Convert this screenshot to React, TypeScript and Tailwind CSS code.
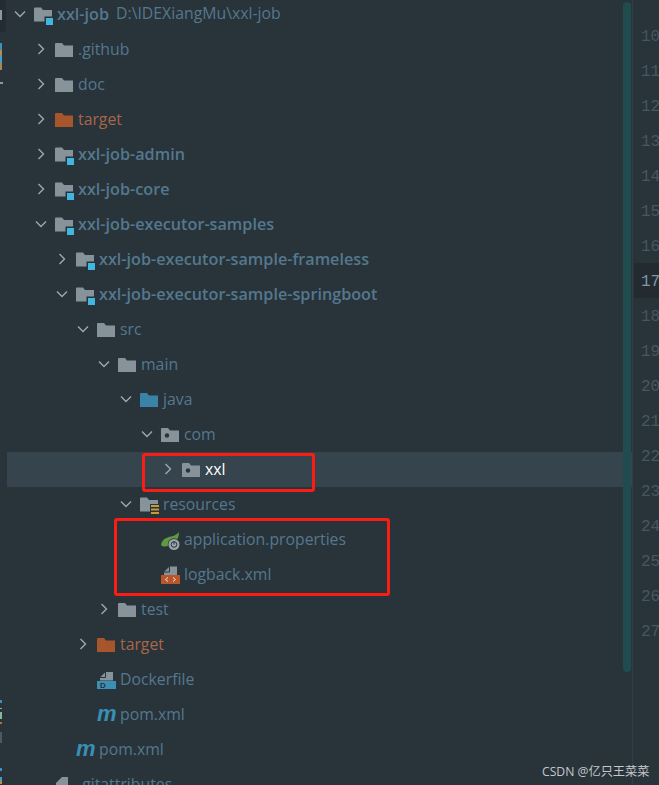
import React from 'react';

type Kind = 'folder' | 'excluded' | 'module' | 'source' | 'pkg' | 'res' | 'spring' | 'xml' | 'docker' | 'maven' | 'file';

type Row = {
  name: string;
  level: number;
  kind: Kind;
  open?: boolean;
  leaf?: boolean;
  bold?: boolean;
  selected?: boolean;
  hint?: string;
};

const rows: Row[] = [
  { name: 'xxl-job', level: 0, kind: 'module', open: true, bold: true, hint: 'D:\\IDEXiangMu\\xxl-job' },
  { name: '.github', level: 1, kind: 'folder' },
  { name: 'doc', level: 1, kind: 'folder' },
  { name: 'target', level: 1, kind: 'excluded' },
  { name: 'xxl-job-admin', level: 1, kind: 'module', bold: true },
  { name: 'xxl-job-core', level: 1, kind: 'module', bold: true },
  { name: 'xxl-job-executor-samples', level: 1, kind: 'module', open: true, bold: true },
  { name: 'xxl-job-executor-sample-frameless', level: 2, kind: 'module', bold: true },
  { name: 'xxl-job-executor-sample-springboot', level: 2, kind: 'module', open: true, bold: true },
  { name: 'src', level: 3, kind: 'folder', open: true },
  { name: 'main', level: 4, kind: 'folder', open: true },
  { name: 'java', level: 5, kind: 'source', open: true },
  { name: 'com', level: 6, kind: 'pkg', open: true },
  { name: 'xxl', level: 7, kind: 'pkg', selected: true },
  { name: 'resources', level: 5, kind: 'res', open: true },
  { name: 'application.properties', level: 6, kind: 'spring', leaf: true },
  { name: 'logback.xml', level: 6, kind: 'xml', leaf: true },
  { name: 'test', level: 4, kind: 'folder' },
  { name: 'target', level: 3, kind: 'excluded' },
  { name: 'Dockerfile', level: 3, kind: 'docker', leaf: true },
  { name: 'pom.xml', level: 3, kind: 'maven', leaf: true },
  { name: 'pom.xml', level: 2, kind: 'maven', leaf: true },
  { name: '.gitattributes', level: 1, kind: 'file', leaf: true },
];

const indents = ['pl-[6px]', 'pl-[27px]', 'pl-[48px]', 'pl-[69px]', 'pl-[90px]', 'pl-[112px]', 'pl-[133px]', 'pl-[154px]'];

const lineNumbers = [10, 11, 12, 13, 14, 15, 16, 17, 18, 19, 20, 21, 22, 23, 24, 25, 26, 27];

// leftovers of the tool window bar, cut off at the left edge of the shot
const edgeMarks = [
  'top-[10px] h-[10px] w-[2px] bg-[#8d979c]',
  'top-[43px] h-[7px] w-[2px] bg-[#3f8fb8]',
  'top-[50px] h-[5px] w-[2px] bg-[#b98a4a]',
  'top-[55px] h-[8px] w-[2px] bg-[#4a9cc4]',
  'top-[63px] h-[7px] w-[2px] bg-[#a9854f]',
  'top-[82px] h-[2px] w-[3px] bg-[#8d979c]',
  'top-[700px] h-[3px] w-[2px] bg-[#3f8fb8]',
  'top-[708px] h-[1px] w-[2px] bg-[#a0a7ac]',
  'top-[712px] h-[7px] w-[2px] bg-[#7fb89a]',
  'top-[722px] h-[2px] w-[2px] bg-[#b9703a]',
  'top-[732px] h-[11px] w-[2px] bg-[#4d585f]',
  'top-[768px] h-[3px] w-[2px] bg-[#3f8fb8]',
  'top-[777px] h-[4px] w-[2px] bg-[#4a9cc4]',
  'top-[781px] h-[3px] w-[2px] bg-[#b98a4a]',
];

const FOLDER = 'M0 5 A1 1 0 0 1 1 4 H7 L9 6.5 H18 V18 H0 Z';
const BG = '#29333a';

const FileIcon = ({ kind }: { kind: Kind }) => {
  if (kind === 'maven') {
    return (
      <span className="w-[19px] shrink-0 font-['Liberation_Sans',sans-serif] text-[22px] leading-[20px] font-bold text-[#3a8fb5] italic">
        m
      </span>
    );
  }
  return (
    <svg width="19" height="20" viewBox="0 0 19 20" className="shrink-0 overflow-visible">
      {kind === 'folder' && <path d={FOLDER} fill="#87939a" />}
      {kind === 'excluded' && <path d={FOLDER} fill="#a7552a" />}
      {kind === 'source' && <path d={FOLDER} fill="#3a83a6" />}
      {kind === 'pkg' && (
        <g>
          <path d={FOLDER} fill="#87939a" />
          <circle cx="6" cy="11.5" r="2.2" fill={BG} />
        </g>
      )}
      {kind === 'module' && (
        <g>
          <path d={FOLDER} transform="translate(0 -0.5)" fill="#87939a" />
          <rect x="10.5" y="12.5" width="9" height="9" fill={BG} />
          <rect x="12" y="14" width="7" height="7" fill="#40b6e0" />
        </g>
      )}
      {kind === 'res' && (
        <g>
          <path d={FOLDER} transform="translate(0 -0.5)" fill="#87939a" />
          <rect x="10" y="10" width="9" height="11" fill={BG} />
          <path d="M11 11h8v2h-8zM11 14.5h8v2h-8zM11 18h8v2h-8z" fill="#c79a35" />
        </g>
      )}
      {kind === 'spring' && (
        <g>
          <path d="M0 16 C1 9 8 8 12 7 C14 6.500 16 5 18 3 C18 8 16 12 12 14 C8 17 3 19 0 16 Z" fill="#5d9b3f" />
          <circle cx="13" cy="15.5" r="6.2" fill={BG} />
          <circle cx="13" cy="15.5" r="5.5" fill="#9aa4aa" />
          <circle cx="13" cy="15.5" r="2.8" fill="none" stroke={BG} strokeWidth="1" />
          <path d="M13 12.5v3" stroke={BG} strokeWidth="1" />
        </g>
      )}
      {kind === 'xml' && (
        <g>
          <path d="M3 8 L8.5 2.5 H16 V11 H3 Z" fill="#87939a" />
          <path d="M3 8 H8.5 V2.5" fill="none" stroke={BG} strokeWidth="1" />
          <rect x="0" y="11" width="19" height="9" fill="#b9562a" />
          <path d="M7 13.5l-2.5 2 2.5 2M12 13.5l2.5 2-2.5 2" fill="none" stroke="#e6e6e6" strokeWidth="1" />
        </g>
      )}
      {kind === 'docker' && (
        <g>
          <path d="M3 8.5 L8.5 3 H16 V11.500 H3 Z" fill="#87939a" />
          <path d="M3 8.5 H8.5 V3" fill="none" stroke={BG} strokeWidth="1" />
          <rect x="0" y="12" width="19" height="8" fill="#3a8fb5" />
          <text x="3" y="19" fontFamily="'Liberation Sans', sans-serif" fontSize="8" fontWeight="700" fill={BG}>D</text>
        </g>
      )}
      {kind === 'file' && <path d="M1 9 L7 3 H13 V20 H1 Z" fill="#87939a" />}
    </svg>
  );
};

const Chevron = ({ open }: { open?: boolean }) => (
  <svg width="14" height="14" viewBox="0 0 14 14" className="shrink-0 overflow-visible">
    <path d={open ? 'M2 4.5 L7 9.5 L12 4.5' : 'M4.5 2 L9.5 7 L4.5 12'} fill="none" stroke="#a0a7ac" strokeWidth="1.4" />
  </svg>
);

const TreeRow = ({ row }: { row: Row }) => {
  let color = 'text-[#54788e]';
  if (row.kind === 'excluded') color = 'text-[#a8664a]';
  if (row.selected) color = 'text-white';
  return (
    <div className={`flex h-[35px] items-center whitespace-nowrap ${indents[row.level]} ${row.selected ? 'bg-[#36454d]' : ''}`}>
      <div className="w-[21px] shrink-0">{!row.leaf && <Chevron open={row.open} />}</div>
      <FileIcon kind={row.kind} />
      <span className={`ml-[4px] ${color} ${row.bold ? 'text-[16.2px] font-semibold' : 'mt-[2px]'}`}>{row.name}</span>
      {row.hint && <span className="ml-[7px] text-[#54788e]">{row.hint}</span>}
    </div>
  );
};

export default function App() {
  return (
    <div className="relative flex h-[785px] w-[659px] overflow-hidden bg-[#29333a] font-['Open_Sans','Noto_Sans_CJK_SC',sans-serif] text-[15.8px]">
      {/* strip of the tool window bar */}
      <div className="w-[7px] shrink-0">
        <div className="h-[32px] w-[6px] bg-[#232c32]" />
      </div>
      {edgeMarks.map((mark) => (
        <div key={mark} className={`absolute left-0 ${mark}`} />
      ))}

      {/* project tree */}
      <div className="relative w-[625px] shrink-0 overflow-hidden">
        <div className="-mt-[3.5px]">
          {rows.map((row, i) => (
            <TreeRow key={i} row={row} />
          ))}
        </div>
        <div className="absolute top-[2px] left-[616px] h-[670px] w-[8px] rounded-full bg-[#1f4d4f]" />
      </div>

      {/* editor gutter */}
      <div className="flex-1 border-l border-[#323d45] pt-[18px] pl-[1px]">
        {lineNumbers.map((n) => (
          <div
            key={n}
            className={`h-[35px] pt-[10px] pl-[7px] font-['Liberation_Mono',monospace] text-[16px] leading-[18px] whitespace-nowrap ${n === 17 ? 'bg-[#232b31] text-[#7f97a8]' : 'text-[#46585f]'}`}
          >
            {n}
          </div>
        ))}
      </div>

      {/* annotations on top of the screenshot */}
      <div className="absolute top-[453px] left-[142px] h-[39px] w-[173px] rounded-[3px] border-[3px] border-[#fb1c14]" />
      <div className="absolute top-[518px] left-[114px] h-[78px] w-[276px] rounded-[3px] border-[3px] border-[#fb1c14]" />
      <div className="absolute top-[763px] left-[542px] text-[12.2px] text-[#c4c8ca]">CSDN @亿只王菜菜</div>
    </div>
  );
}
